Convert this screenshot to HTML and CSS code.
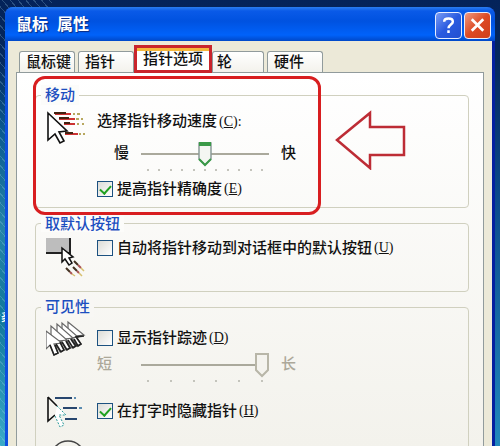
FILE: index.html
```html
<!DOCTYPE html>
<html lang="zh-CN">
<head>
  <meta charset="UTF-8" />
  <meta name="viewport" content="width=device-width, initial-scale=1.0"/>
  <title>鼠标 属性</title>
  <link rel="stylesheet" href="styles.css">
</head>
<body>

  <span class="desktop-label">豸</span>

  <!-- ===== Dialog Window ===== -->
  <div class="window">
    <header class="title-bar">
      <h1>鼠标&nbsp;&nbsp;属性</h1>
      <button class="title-btn" type="button" aria-label="帮助">
        <svg viewBox="0 0 26 26" width="26" height="26" fill="none" stroke="#fff" stroke-width="2.6"><path d="M8.500 9.500C8.500 5 17.500 5 17.500 9.500C17.500 12.500 13 12.500 13 16.500"/><path d="M13 18.500v2.800"/></svg>
      </button>
      <button class="title-btn close" type="button" aria-label="关闭">
        <svg viewBox="0 0 26 26" width="26" height="26" fill="none" stroke="#fff" stroke-width="2.8"><path d="M7 7l12 12M19 7L7 19"/></svg>
      </button>
    </header>

    <div class="window-body">
      <!-- ===== Tabs ===== -->
      <nav class="tabs">
        <button class="tab" type="button">鼠标键</button>
        <button class="tab" type="button">指针</button>
        <button class="tab active" type="button">指针选项</button>
        <button class="tab wheel" type="button">轮</button>
        <button class="tab" type="button">硬件</button>
      </nav>

      <main class="panel">
        <!-- ===== Motion ===== -->
        <section class="group motion">
          <h2>移动</h2>
          <svg class="icon" viewBox="0 0 42 42" width="42" height="42" fill="none">
            <path stroke="#c33" stroke-width="2" d="M9 6h16M13 11h16M18 16h11M19 26h13"/>
            <path stroke="#421" stroke-width="2" d="M8 5h12M13 10h10M18 15h6M19 25h8"/>
            <path stroke="#b8a860" stroke-width="2" d="M27 6h2M31 6h3M30 11h3M35 11h2M31 16h2M36 16h2M33 26h2M37 26h2"/>
            <path d="M2 5v27l7-6 5 9 4-2-5-9 8-1z" fill="#fff" stroke="#111" stroke-width="1.600"/>
          </svg>
          <div class="fields">
            <label class="caption" for="speed">选择指针移动速度<span class="key">(<u>C</u>):</span></label>
            <div class="slider-row">
              <span>慢</span>
              <div class="slider">
                <input type="range" id="speed" min="0" max="10" value="5">
                <div class="ticks"><i></i><i></i><i></i><i></i><i></i><i></i><i></i><i></i><i></i><i></i><i></i></div>
              </div>
              <span>快</span>
            </div>
            <label class="check"><input type="checkbox" checked>提高指针精确度<span class="key">(<u>E</u>)</span></label>
          </div>
          <div class="highlight"></div>
          <svg class="arrow" viewBox="0 0 72 60" width="72" height="60"><path d="M2 30L35 3v14h34v28H35v13z" fill="none" stroke="#bd2c35" stroke-width="2.500"/></svg>
        </section>

        <!-- ===== Snap To ===== -->
        <section class="group snap">
          <h2>取默认按钮</h2>
          <svg class="icon" viewBox="0 0 42 42" width="42" height="42">
            <path d="M0 2h23v14H0z" fill="#bdbdbd"/>
            <path d="M0 17h24V2" fill="none" stroke="#222" stroke-width="2"/>
            <path d="M16 12v14l3-3 4 6 3-2-3-5 4-1z" fill="#fff" stroke="#111" stroke-width="1.500"/>
            <path d="M28 25l4 4M20 32l4 4M27 31l4 4" stroke="#432" stroke-width="2"/>
            <path d="M32 29l3 3M24 36l2 2M31 35l2 2" stroke="#a55" stroke-width="2"/>
            <path d="M35 32l3 3M26 38l3 2M33 37l3 3" stroke="#d8c070" stroke-width="1.500"/>
          </svg>
          <div class="fields">
            <label class="check"><input type="checkbox">自动将指针移动到对话框中的默认按钮<span class="key">(<u>U</u>)</span></label>
          </div>
        </section>

        <!-- ===== Visibility ===== -->
        <section class="group visibility">
          <h2>可见性</h2>
          <div class="option">
            <svg class="icon" viewBox="0 0 42 42" width="42" height="42">
              <g fill="#fff" stroke="#666" stroke-width="1.200">
                <path d="M22 2v20l4-4 5 8 4-2-5-8 8-1z"/>
                <path d="M16 3v20l4-4 5 9 4-2-5-8 8-1z"/>
                <path d="M11 4v20l4-4 5 10 4-2-5-9 8-1z"/>
                <path d="M5 6v20l4-4 5 10 4-2-5-9 8-1z"/>
                <path d="M0 11v18l4-4 4 10 4-2-4-9 8-1z"/>
              </g>
              <path d="M4 25l4 10 4-2-3-8M10 24l5 8 3-2-4-8M16 22l5 8 3-2-4-7M22 20l5 8 3-2-5-7M28 19l4 7 3-2-5-7 8-1" fill="none" stroke="#222" stroke-width="1.600"/>
            </svg>
            <div class="fields">
              <label class="check"><input type="checkbox">显示指针踪迹<span class="key">(<u>D</u>)</span></label>
              <div class="slider-row disabled">
                <span>短</span>
                <div class="slider">
                  <input type="range" aria-label="踪迹长度" min="0" max="10" value="10" disabled>
                  <div class="ticks"><i></i><i></i><i></i><i></i><i></i><i></i></div>
                </div>
                <span>长</span>
              </div>
            </div>
          </div>
          <div class="option">
            <svg class="icon" viewBox="0 0 42 42" width="42" height="42" fill="none">
              <path d="M9 5h17M17 15h14M19 26h12" stroke="#27466e" stroke-width="2"/>
              <path d="M28 5h2M33 15h3" stroke="#5a8bb0" stroke-width="2"/>
              <path d="M2 4v24l7-6M2 4l9 9" stroke="#111" stroke-width="1.600"/>
              <path d="M11 13l9 9h-7l5 10-4 2-5-11" fill="#fff" stroke="#2a9a9a" stroke-dasharray="2 1.500"/>
            </svg>
            <div class="fields">
              <label class="check"><input type="checkbox" checked>在打字时隐藏指针<span class="key">(<u>H</u>)</span></label>
            </div>
          </div>
          <div class="option">
            <svg class="icon" viewBox="0 0 42 42" width="42" height="42" fill="none" stroke="#444" stroke-width="1.600"><circle cx="22" cy="18" r="17"/><circle cx="22" cy="18" r="11"/></svg>
          </div>
        </section>
      </main>
    </div>
  </div>

</body>
</html>
```

FILE: styles.css
```css
* { box-sizing: border-box; }

body {
  margin: 0;
  padding: 7px 5px 0;
  height: 100vh;
  overflow: hidden;
  position: relative;
  font: 500 15px/20px 'Liberation Sans', 'Noto Sans CJK SC', sans-serif;
  color: #111;
  background:
    repeating-linear-gradient(50deg, rgba(160,215,240,0.25) 0 1px, transparent 1px 6px) left / 52px 100% no-repeat,
    linear-gradient(#04235a 0, #05285e 60px, #0a5a90 130px, #2484a8 230px, #12789c 320px, #3aaac8 100%) left / 50% 100% no-repeat,
    linear-gradient(#04235a 0, #05285e 60px, #0a4a8c 200px, #2088bc 100%);
}

h1, h2 { margin: 0; }
button, input { font: inherit; }

/* ===== Dialog Window ===== */
.window {
  height: 100%;
  display: flex;
  flex-direction: column;
  padding: 0 3px;
  background: linear-gradient(90deg, #0c4fe0 50%, #0420a0 50%);
  border-radius: 8px 8px 0 0;
}

.title-bar {
  display: flex;
  align-items: center;
  gap: 2px;
  height: 34px;
  flex-shrink: 0;
  margin: 0 -3px;
  padding: 2px 4px 0 11px;
  border-radius: 8px 8px 0 0;
  background: linear-gradient(#2a7df0 0, #0a5ae8 4px, #0052e0 14px, #0062fa 28px, #0048c8 100%);
}
.title-bar h1 {
  flex: 1;
  font-size: 16px;
  font-weight: bold;
  color: #fff;
  text-shadow: 1px 1px 1px #0a2a80;
}
.title-btn {
  width: 27px;
  height: 27px;
  padding: 0;
  display: flex;
  align-items: center;
  justify-content: center;
  border: 1px solid #e8eeff;
  border-radius: 4px;
  background: linear-gradient(135deg, #7a9cf4, #2a5be0 50%, #2350d0);
}
.title-btn.close { background: linear-gradient(135deg, #f09a80, #dd4a24 50%, #cf3f1c); }

.window-body {
  flex: 1;
  min-height: 0;
  display: flex;
  flex-direction: column;
  padding: 8px 8px 0;
  background: #ece9d8;
}

/* ===== Tabs ===== */
.tabs {
  display: flex;
  align-items: flex-end;
  gap: 3px;
  padding-left: 3px;
  height: 23px;
  flex-shrink: 0;
}
.tab {
  width: 56px;
  height: 21px;
  padding: 0 0 0 6px;
  text-align: left;
  white-space: nowrap;
  line-height: 20px;
  color: #111;
  border: 1px solid #919b9c;
  border-bottom: 0;
  border-radius: 3px 3px 0 0;
  background: linear-gradient(#fff, #f3f2ec);
}
.tab.active {
  width: 78px;
  height: 28px;
  margin: 0 -3px -1px;
  z-index: 1;
  border: 3px solid #c9252c;
  border-radius: 0;
  background: linear-gradient(#f5b83c 3px, #fff 3px);
}
.tab.wheel { width: 52px; padding-left: 4px; }

.panel {
  flex: 1;
  min-height: 0;
  overflow: hidden;
  padding: 22px 14px 0 18px;
  border: 1px solid #919b9c;
  border-bottom: 0;
  background: linear-gradient(#fff, #f3f2ec);
}

/* ===== Group Boxes ===== */
.group {
  position: relative;
  display: flex;
  gap: 9px;
  padding: 12px 10px 0;
  border: 1px solid #d0d0bf;
  border-radius: 4px;
}
.group h2 {
  position: absolute;
  top: -11px;
  left: 5px;
  padding: 0 4px;
  font-size: 15px;
  font-weight: 500;
  color: #1c4fc0;
  background: #fcfcfa;
}
.group.motion { height: 113px; }
.group.snap { height: 69px; margin-top: 15px; }
.group.snap h2 { line-height: 16px; top: -8px; }
.group.visibility {
  flex-direction: column;
  gap: 0;
  height: 180px;
  margin-top: 15px;
}
.group.visibility h2 { background: #f8f7f4; }
.icon { flex-shrink: 0; }
.option { display: flex; gap: 9px; }
.snap .fields { padding-top: 2px; }
.visibility .fields { height: 73px; padding-top: 8px; }
.option + .option .fields { height: 47px; }
.fields { flex: 1; white-space: nowrap; }
.key {
  margin-left: 2px;
  font-family: 'Liberation Serif', serif;
  font-size: 14px;
}

.caption { display: block; margin: 3px 0 11px; }
.slider-row {
  display: flex;
  gap: 12px;
  padding-left: 17px;
}
.slider-row.disabled {
  padding-left: 0;
  margin-top: 6px;
  color: #aca899;
}
.disabled .slider { margin-left: 17px; }
.slider-row + .check { margin-top: 8px; }

/* ===== Slider ===== */
.slider { width: 128px; }
.slider input {
  display: block;
  -webkit-appearance: none;
  appearance: none;
  width: 100%;
  height: 22px;
  margin: 0;
  background: linear-gradient(#aaa99c, #aaa99c) center / 100% 2px no-repeat;
}
.slider input::-webkit-slider-thumb {
  -webkit-appearance: none;
  width: 14px;
  height: 26px;
  background: url("data:image/svg+xml,%3Csvg xmlns='http://www.w3.org/2000/svg' viewBox='0 0 14 26'%3E%3Cpath d='M1 2h12v16l-6 6-6-6z' fill='%23f4f6f2' stroke='%238a9a98' stroke-width='1.500'/%3E%3Cpath d='M1 1h12v4H1z' fill='%233a9a48'/%3E%3Cpath d='M1 18l6 6 6-6' fill='none' stroke='%233a9a48' stroke-width='2'/%3E%3C/svg%3E") no-repeat;
}
.slider input:disabled::-webkit-slider-thumb {
  background-image: url("data:image/svg+xml,%3Csvg xmlns='http://www.w3.org/2000/svg' viewBox='0 0 14 26'%3E%3Cpath d='M1 2h12v16l-6 6-6-6z' fill='%23f4f3ee' stroke='%23b8b6a8' stroke-width='2'/%3E%3C/svg%3E");
}
.ticks {
  display: flex;
  justify-content: space-between;
  padding: 4px 6px 0;
}
.ticks i { width: 2px; height: 2px; background: #c4c4bc; }

/* ===== Check Box ===== */
.check { display: flex; align-items: center; }
.check input {
  -webkit-appearance: none;
  appearance: none;
  width: 16px;
  height: 16px;
  margin: 0 4px 0 0;
  position: relative;
  border: 1px solid #1c5180;
  background: linear-gradient(135deg, #dcdcd7, #fff);
}
.check input:checked::after {
  content: '';
  position: absolute;
  top: 1px;
  left: 4px;
  width: 5px;
  height: 9px;
  border: solid #21a121;
  border-width: 0 2px 2px 0;
  transform: rotate(42deg);
}

/* ===== Markup ===== */
.highlight {
  position: absolute;
  top: -20px;
  left: -3px;
  width: 288px;
  height: 139px;
  border: 3px solid #d81e20;
  border-radius: 12px;
}
.arrow { position: absolute; top: 14px; left: 299px; }

.desktop-label {
  position: absolute;
  left: 0;
  top: 308px;
  z-index: -1;
  font-size: 12px;
  color: #fff;
}
```
